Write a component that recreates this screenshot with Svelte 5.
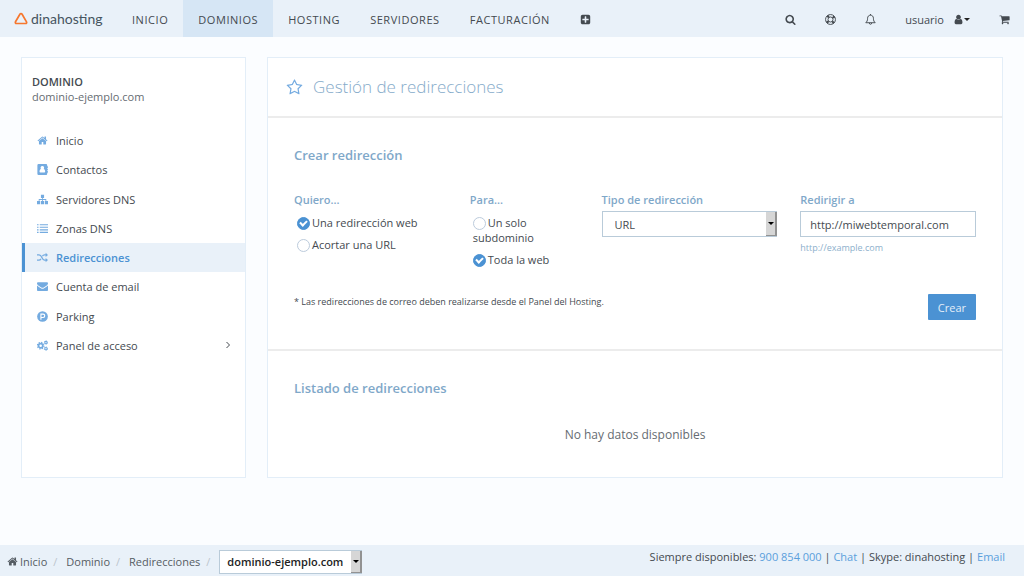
<script>
const nav = ['Inicio', 'Dominios', 'Hosting', 'Servidores', 'Facturación'];
const menu = [
     { icon: 'home', text: 'Inicio' },
     { icon: 'contact', text: 'Contactos' },
     { icon: 'sitemap', text: 'Servidores DNS' },
     { icon: 'list', text: 'Zonas DNS' },
     { icon: 'random', text: 'Redirecciones' },
     { icon: 'mail', text: 'Cuenta de email' },
     { icon: 'parking', text: 'Parking' },
     { icon: 'cogs', text: 'Panel de acceso', more: true }
];
const crumbs = ['Inicio', 'Dominio', 'Redirecciones'];

let section = $state('Dominios');
let page = $state('Redirecciones');
let want = $state('web');
let target = $state('all');
let type = $state('URL');
let url = $state('http://miwebtemporal.com');
let domain = $state('dominio-ejemplo.com');
let redirects = $state([]);

function create(event) {
     event.preventDefault();
     if (url == '') {
          return;
     }
     redirects = [...redirects, { type, url }];
}
</script>

{#snippet icon(name)}
     {#if name == 'home'}
          <svg class="icon" viewBox="0 0 1792 1792" aria-hidden="true"><path d="M1472 992v480q0 26-19 45t-45 19h-384v-384h-256v384h-384q-26 0-45-19t-19-45v-480q0-1 .5-3t.5-3l575-474 575 474q1 2 1 6zm223-69l-62 74q-8 9-21 11h-3q-13 0-21-7l-692-577-692 577q-12 8-24 7-13-2-21-11l-62-74q-8-10-7-23.5t11-21.5l719-599q32-26 76-26t76 26l244 204v-195q0-14 9-23t23-9h192q14 0 23 9t9 23v408l219 182q10 8 11 21.5t-7 23.5z" /></svg>
     {:else if name == 'contact'}
          <svg class="icon" viewBox="0 0 14 14" aria-hidden="true"><path fill-rule="evenodd" d="M2 0h9.500A1.500 1.500 0 0 1 13 1.500V3h.8v2H13v1h.8v2H13v1h.8v2H13v1.500a1.500 1.500 0 0 1-1.500 1.500H2A1.500 1.500 0 0 1 .5 12.500v-11A1.500 1.500 0 0 1 2 0zM6.800 2.600a2.200 2.200 0 0 0-1.700 3.700C3.800 6.500 3.200 8 3.200 9.600c0 .7.4 1.200 1 1.200h5.200c.6 0 1-.5 1-1.200 0-1.600-.6-3.100-1.900-3.300A2.200 2.200 0 0 0 6.800 2.600z" /></svg>
     {:else if name == 'sitemap'}
          <svg class="icon" viewBox="0 0 14 14" aria-hidden="true"><path d="M5 1h4v4H7.500v1.500h4.300V9H14v4h-4V9h.8V7.500H7.500V9H9v4H5V9h1.500V7.500H3.200V9H4v4H0V9h2.200V6.500h4.300V5H5z" /></svg>
     {:else if name == 'list'}
          <svg class="icon" viewBox="0 0 14 14" aria-hidden="true"><path d="M0 1.500h2V3H0zM3.500 1.500H14V3H3.500zM0 4.700h2v1.500H0zM3.500 4.700H14v1.500H3.500zM0 7.900h2v1.500H0zM3.500 7.900H14v1.500H3.500zM0 11.100h2v1.500H0zM3.500 11.100H14v1.500H3.500z" /></svg>
     {:else if name == 'random'}
          <svg class="icon" viewBox="0 0 14 14" aria-hidden="true"><path d="M0 3.700h2.500C6.700 3.700 6 10.300 9.500 10.300h2M0 10.300h2.500c1.300 0 2-.7 2.500-1.600M6.800 5.400c.6-1 1.300-1.700 2.700-1.700h2" fill="none" stroke="currentColor" stroke-width="1.700" /><path d="M11 1l3 2.700-3 2.700zM11 7.600l3 2.700-3 2.700z" /></svg>
     {:else if name == 'mail'}
          <svg class="icon" viewBox="0 0 14 14" aria-hidden="true"><path d="M0 3.200C0 2.300.6 1.700 1.500 1.700h11c.9 0 1.500.6 1.500 1.500 0 1-.8 1.900-1.600 2.400L8.500 8.200c-1 .7-2 .7-3 0L1.600 5.600C.8 5 0 4.200 0 3.200zM0 5.600c1.500 1.300 3.300 2.400 5 3.600 1.300.9 2.700.9 4 0 1.700-1.200 3.500-2.300 5-3.600v5.700c0 .9-.6 1.500-1.500 1.500h-11C.6 12.800 0 12.200 0 11.300z" /></svg>
     {:else if name == 'parking'}
          <svg class="icon" viewBox="0 0 14 14" aria-hidden="true"><circle cx="7" cy="7" r="6.800" /><path d="M5 11V4h2.700a2 2 0 0 1 0 4.300H5" fill="none" stroke="#fff" stroke-width="1.400" /></svg>
     {:else if name == 'cogs'}
          <svg class="icon" viewBox="0 0 14 14" aria-hidden="true"><g fill="none" stroke="currentColor"><circle cx="4.700" cy="7.200" r="2.700" stroke-width="2.200" /><circle cx="4.700" cy="7.200" r="4.200" stroke-width="1.400" stroke-dasharray="1.700 1.600" /><circle cx="11.400" cy="3.300" r="1.500" stroke-width="1.400" /><circle cx="11.400" cy="3.300" r="2.300" stroke-width=".9" stroke-dasharray="1.200 1.200" /><circle cx="11.400" cy="11" r="1.500" stroke-width="1.400" /><circle cx="11.400" cy="11" r="2.300" stroke-width=".9" stroke-dasharray="1.200 1.200" /></g></svg>
     {:else if name == 'plus'}
          <svg class="icon" viewBox="0 0 1792 1792" aria-hidden="true"><path d="M1408 960v-128q0-26-19-45t-45-19h-320v-320q0-26-19-45t-45-19h-128q-26 0-45 19t-19 45v320h-320q-26 0-45 19t-19 45v128q0 26 19 45t45 19h320v320q0 26 19 45t45 19h128q26 0 45-19t19-45v-320h320q26 0 45-19t19-45zm256-544v960q0 119-84.500 203.500t-203.500 84.500h-960q-119 0-203.500-84.500t-84.500-203.500v-960q0-119 84.500-203.500t203.500-84.500h960q119 0 203.500 84.500t84.500 203.500z" /></svg>
     {:else if name == 'search'}
          <svg class="icon" viewBox="0 0 1792 1792" aria-hidden="true"><path d="M1216 832q0-185-131.500-316.500t-316.500-131.500-316.500 131.500-131.500 316.500 131.500 316.500 316.500 131.500 316.500-131.500 131.500-316.500zm512 832q0 52-38 90t-90 38q-54 0-90-38l-343-342q-179 124-399 124-143 0-273.500-55.500t-225-150-150-225-55.500-273.500 55.500-273.500 150-225 225-150 273.500-55.500 273.500 55.500 225 150 150 225 55.500 273.500q0 220-124 399l343 343q37 37 37 90z" /></svg>
     {:else if name == 'help'}
          <svg class="icon" viewBox="0 0 14 14" aria-hidden="true"><g fill="none" stroke="currentColor"><circle cx="7" cy="7" r="6.300" stroke-width="1.200" /><circle cx="7" cy="7" r="3.200" stroke-width="1.200" /><circle cx="7" cy="7" r="4.800" stroke-width="3" stroke-dasharray="2.600 4.940" stroke-dashoffset="-2.470" /></g></svg>
     {:else if name == 'bell'}
          <svg class="icon" viewBox="0 0 14 14" aria-hidden="true"><path d="M7 1.500C4.600 1.500 3.300 3.300 3.300 5.400c0 3-.9 4.500-2.300 5.700h12c-1.400-1.200-2.300-2.700-2.300-5.700 0-2.100-1.300-3.900-3.700-3.900zM7 0v1.500M5.400 11.300c0 2.400 3.200 2.400 3.200 0" fill="none" stroke="currentColor" stroke-width="1.200" /></svg>
     {:else if name == 'user'}
          <svg class="icon" viewBox="0 0 1792 1792" aria-hidden="true"><path d="M1536 1399q0 109-62.500 187t-150.500 78h-854q-88 0-150.500-78t-62.500-187q0-85 8.500-160.500t31.500-152 58.500-131 94-89 134.500-34.500q131 128 313 128t313-128q76 0 134.500 34.500t94 89 58.500 131 31.500 152 8.500 160.500zm-256-887q0 159-112.500 271.500t-271.500 112.500-271.500-112.500-112.500-271.500 112.500-271.500 271.500-112.500 271.500 112.500 112.500 271.500z" /></svg>
     {:else if name == 'cart'}
          <svg class="icon" viewBox="0 0 1792 1792" aria-hidden="true"><path d="M704 1536q0 52-38 90t-90 38-90-38-38-90 38-90 90-38 90 38 38 90zm896 0q0 52-38 90t-90 38-90-38-38-90 38-90 90-38 90 38 38 90zm128-1088v512q0 24-16.500 42.500t-40.500 21.500l-1044 122q13 60 13 70 0 16-24 64h920q26 0 45 19t19 45-19 45-45 19h-1024q-26 0-45-19t-19-45q0-11 8-31.500t16-36 21.500-40 15.500-29.500l-177-823h-204q-26 0-45-19t-19-45 19-45 45-19h256q16 0 28.500 6.500t19.500 15.500 13 24.500 8 26 5.500 29.500 4.500 26h1201q26 0 45 19t19 45z" /></svg>
     {:else if name == 'star'}
          <svg class="icon" viewBox="0 0 1792 1792" aria-hidden="true"><path d="M1201 1004l306-297-422-62-189-382-189 382-422 62 306 297-73 421 378-199 377 199zm527-357q0 22-26 48l-363 354 86 500q1 7 1 20 0 50-41 50-19 0-40-12l-449-236-449 236q-22 12-40 12-21 0-31.500-14.500t-10.500-35.500q0-6 2-20l86-500-364-354q-25-27-25-48 0-37 56-46l502-73 225-455q19-41 49-41t49 41l225 455 502 73q56 9 56 46z" /></svg>
     {/if}
{/snippet}

<div class="app">
     <header>
          <a class="logo" href="#inicio">
               <svg viewBox="0 0 14 13" aria-hidden="true"><path d="M5.900 2.200 1.500 9.800c-.5.900 0 1.700 1 1.700h9c1 0 1.500-.8 1-1.700L8.100 2.200c-.5-.9-1.700-.9-2.200 0z" fill="none" stroke="#f6772e" stroke-width="1.700" /></svg>
               <span>dinahosting</span>
          </a>
          <nav class="main-nav">
               {#each nav as item}
                    <a href="#{item}" class:active={item == section} onclick={() => section = item}>{item}</a>
               {/each}
               <button type="button" aria-label="Añadir">{@render icon('plus')}</button>
          </nav>
          <div class="tools">
               <button type="button" aria-label="Buscar">{@render icon('search')}</button>
               <button type="button" aria-label="Ayuda">{@render icon('help')}</button>
               <button type="button" aria-label="Avisos">{@render icon('bell')}</button>
               <button type="button" class="user">usuario {@render icon('user')}<span class="caret"></span></button>
               <button type="button" aria-label="Carrito">{@render icon('cart')}</button>
          </div>
     </header>

     <div class="content">
          <aside>
               <div class="domain">
                    <strong>DOMINIO</strong>
                    <span>dominio-ejemplo.com</span>
               </div>
               <ul>
                    {#each menu as item}
                         <li>
                              <a href="#{item.icon}" class:active={item.text == page} onclick={() => page = item.text}>
                                   {@render icon(item.icon)}
                                   <span>{item.text}</span>
                                   {#if item.more}
                                        <svg class="chevron" viewBox="0 0 6 8" aria-hidden="true"><path d="M1.500 1l3 3-3 3" fill="none" stroke="currentColor" /></svg>
                                   {/if}
                              </a>
                         </li>
                    {/each}
               </ul>
          </aside>

          <main>
               <div class="title">
                    <button type="button" aria-label="Favorito">{@render icon('star')}</button>
                    <h1>Gestión de redirecciones</h1>
               </div>

               <form onsubmit={create}>
                    <h2>Crear redirección</h2>
                    <div class="fields">
                         <fieldset>
                              <legend>Quiero...</legend>
                              <label class="radio"><input type="radio" name="want" value="web" bind:group={want}>Una redirección web</label>
                              <label class="radio"><input type="radio" name="want" value="short" bind:group={want}>Acortar una URL</label>
                         </fieldset>
                         <fieldset>
                              <legend>Para...</legend>
                              <label class="radio"><input type="radio" name="target" value="sub" bind:group={target}>Un solo subdominio</label>
                              <label class="radio"><input type="radio" name="target" value="all" bind:group={target}>Toda la web</label>
                         </fieldset>
                         <div class="field">
                              <label for="type">Tipo de redirección</label>
                              <div class="select">
                                   <select id="type" bind:value={type}>
                                        <option>URL</option>
                                   </select>
                                   <span class="arrow"></span>
                              </div>
                         </div>
                         <div class="field">
                              <label for="url">Redirigir a</label>
                              <input id="url" type="text" bind:value={url}>
                              <small>http://example.com</small>
                         </div>
                    </div>
                    <div class="bottom">
                         <p>* Las redirecciones de correo deben realizarse desde el Panel del Hosting.</p>
                         <button type="submit">Crear</button>
                    </div>
               </form>

               <section class="list">
                    <h2>Listado de redirecciones</h2>
                    {#if (redirects.length == 0)}
                         <p>No hay datos disponibles</p>
                    {:else}
                         {#each redirects as item}
                              <p>{item.type} {item.url}</p>
                         {/each}
                    {/if}
               </section>
          </main>
     </div>

     <footer>
          <div class="crumbs">
               {#each crumbs as item, index}
                    <a href="#{item}">{#if index == 0}{@render icon('home')}{/if}{item}</a>
                    <span class="slash">/</span>
               {/each}
               <div class="select">
                    <select aria-label="Dominio" bind:value={domain}>
                         <option>dominio-ejemplo.com</option>
                    </select>
                    <span class="arrow"></span>
               </div>
          </div>
          <p>Siempre disponibles: <a href="tel:900854000">900 854 000</a> | <a href="#chat">Chat</a> | Skype: dinahosting | <a href="#email">Email</a></p>
     </footer>
</div>

<style>
:global(body) {
     background: #fbfdff;
}
.app {
     min-height: 100vh;
     display: flex;
     flex-direction: column;
     font-family: "Open Sans", sans-serif;
     font-size: 11px;
     line-height: 15px;
     color: #444a50;
}
*, *::before, *::after {
     box-sizing: border-box;
}
a {
     color: inherit;
     text-decoration: none;
}
button, input, select {
     font: inherit;
     color: inherit;
     margin: 0;
}
button {
     background: none;
     border: none;
     padding: 0;
     cursor: pointer;
}
h1, h2, p, ul {
     margin: 0;
     padding: 0;
}
.icon {
     width: 11px;
     height: 11px;
     fill: currentColor;
     flex-shrink: 0;
}

header {
     height: 37px;
     display: flex;
     background: #e9f1f9;
}
.logo {
     display: flex;
     align-items: center;
     gap: 3px;
     width: 117px;
     padding: 0 0 1px 14px;
     font-family: Lato, sans-serif;
     font-size: 14px;
     color: #46545f;
     & svg {
          width: 14px;
          height: 13px;
     }
}
.main-nav {
     display: flex;
     & a, & button {
          display: flex;
          align-items: center;
          padding: 2px 15px 0;
          letter-spacing: 0.05em;
          text-transform: uppercase;
     }
     & a.active {
          background: #d6e6f5;
     }
}
.tools {
     display: flex;
     align-items: center;
     gap: 29px;
     margin-left: auto;
     padding: 2px 14px 0 0;
     & button {
          display: flex;
          align-items: center;
     }
}
.user .icon {
     margin-left: 9px;
}
.caret {
     border: 3px solid transparent;
     border-top-color: #222;
     border-bottom: none;
}

.content {
     display: grid;
     grid-template-columns: 225px 1fr;
     gap: 21px;
     padding: 20px 21px;
}
aside, main {
     background: #fff;
     border: 1px solid #e3eef8;
}
.domain {
     padding: 16px 10px 0;
     & strong, & span {
          display: block;
     }
     & strong {
          font-weight: 600;
     }
     & span {
          color: #666c72;
     }
}
ul {
     list-style: none;
     margin-top: 22px;
     height: 234px;
     display: flex;
     flex-direction: column;
}
li {
     flex: 1;
     display: flex;
}
li a {
     flex: 1;
     display: flex;
     align-items: center;
     gap: 8px;
     padding: 0 14px 0 12px;
     border-left: 3px solid transparent;
     & .icon {
          color: #74abe0;
     }
     &.active {
          background: #e9f1f9;
          border-color: #4b92d3;
          color: #4b92d3;
          font-weight: 600;
     }
}
.chevron {
     width: 6px;
     height: 8px;
     margin-left: auto;
}

.title {
     display: flex;
     align-items: center;
     gap: 10px;
     height: 60px;
     padding: 0 18px;
     border-bottom: 2px solid #ececec;
     & button {
          display: flex;
          color: #74abe0;
     }
     & .icon {
          width: 17px;
          height: 17px;
     }
}
h1 {
     font-size: 17px;
     font-weight: 300;
     line-height: 24px;
     color: #86abca;
}
h2 {
     font-size: 13px;
     font-weight: 600;
     line-height: 18px;
     color: #7fa8c9;
}
form {
     padding: 28px 26px 29px;
     border-bottom: 2px solid #ececec;
}
.fields {
     display: grid;
     grid-template-columns: 153fr 109fr 176fr 176fr;
     gap: 23px;
     margin-top: 28px;
}
fieldset {
     border: none;
     margin: 0;
     padding: 0;
     min-width: 0;
}
legend, .field label {
     display: block;
     padding: 0;
     margin-bottom: 4px;
     font-weight: 600;
     color: #7fa8c9;
}
.radio {
     display: block;
     margin: 4px 0 7px 3px;
}
input[type="radio"] {
     appearance: none;
     position: relative;
     width: 13px;
     height: 13px;
     margin-right: 2px;
     vertical-align: -3px;
     border: 1px solid #bccbdc;
     border-radius: 50%;
     background: #fff;
     &:checked {
          background: #4b92d3;
          border-color: #4b92d3;
     }
     &:checked::after {
          content: "";
          position: absolute;
          left: 2px;
          top: 2px;
          width: 7px;
          height: 5px;
          border-left: 2px solid #fff;
          border-bottom: 2px solid #fff;
          transform: rotate(-45deg);
     }
}
input[type="text"], select {
     display: block;
     width: 100%;
     height: 26px;
     padding: 0 9px;
     border: 1px solid #b9cbd9;
     border-radius: 0;
     background: #fff;
}
select {
     appearance: none;
     padding: 0 24px 0 12px;
}
.select {
     position: relative;
}
.arrow {
     position: absolute;
     top: 1px;
     right: 0;
     bottom: 1px;
     width: 11px;
     background: #d6d6d6;
     border-right: 2px solid #929292;
     border-bottom: 1px solid #929292;
     pointer-events: none;
     display: grid;
     place-items: center;
     &::after {
          content: "";
          border: 3px solid transparent;
          border-top-color: #000;
          border-bottom: none;
     }
}
small {
     display: block;
     margin-top: 3px;
     font-size: 9px;
     color: #8db0cc;
}
.bottom {
     display: flex;
     justify-content: space-between;
     margin-top: 20px;
     & p {
          font-size: 9px;
     }
     & button {
          height: 26px;
          padding: 0 10px;
          border-radius: 1px;
          background: #4b92d3;
          color: #e3eef8;
     }
}
.list {
     padding: 28px 26px 33px;
     & p {
          margin-top: 29px;
          text-align: center;
          font-size: 12px;
          line-height: 18px;
          color: #666c72;
     }
}

footer {
     display: flex;
     justify-content: space-between;
     min-height: 31px;
     margin-top: auto;
     padding: 0 19px 0 7px;
     background: #e9f1f9;
     & p {
          padding-top: 4px;
     }
     & p a {
          color: #5a9fdc;
     }
}
.crumbs {
     display: flex;
     align-items: center;
     gap: 6px;
     padding-top: 2px;
     color: #555c63;
     & a {
          display: flex;
          align-items: center;
          gap: 2px;
     }
     & select {
          height: 24px;
          padding: 0 18px 0 7px;
          font-weight: 600;
          color: #222;
     }
}
.slash {
     margin-right: 3px;
     color: #bcc5cd;
}
</style>
